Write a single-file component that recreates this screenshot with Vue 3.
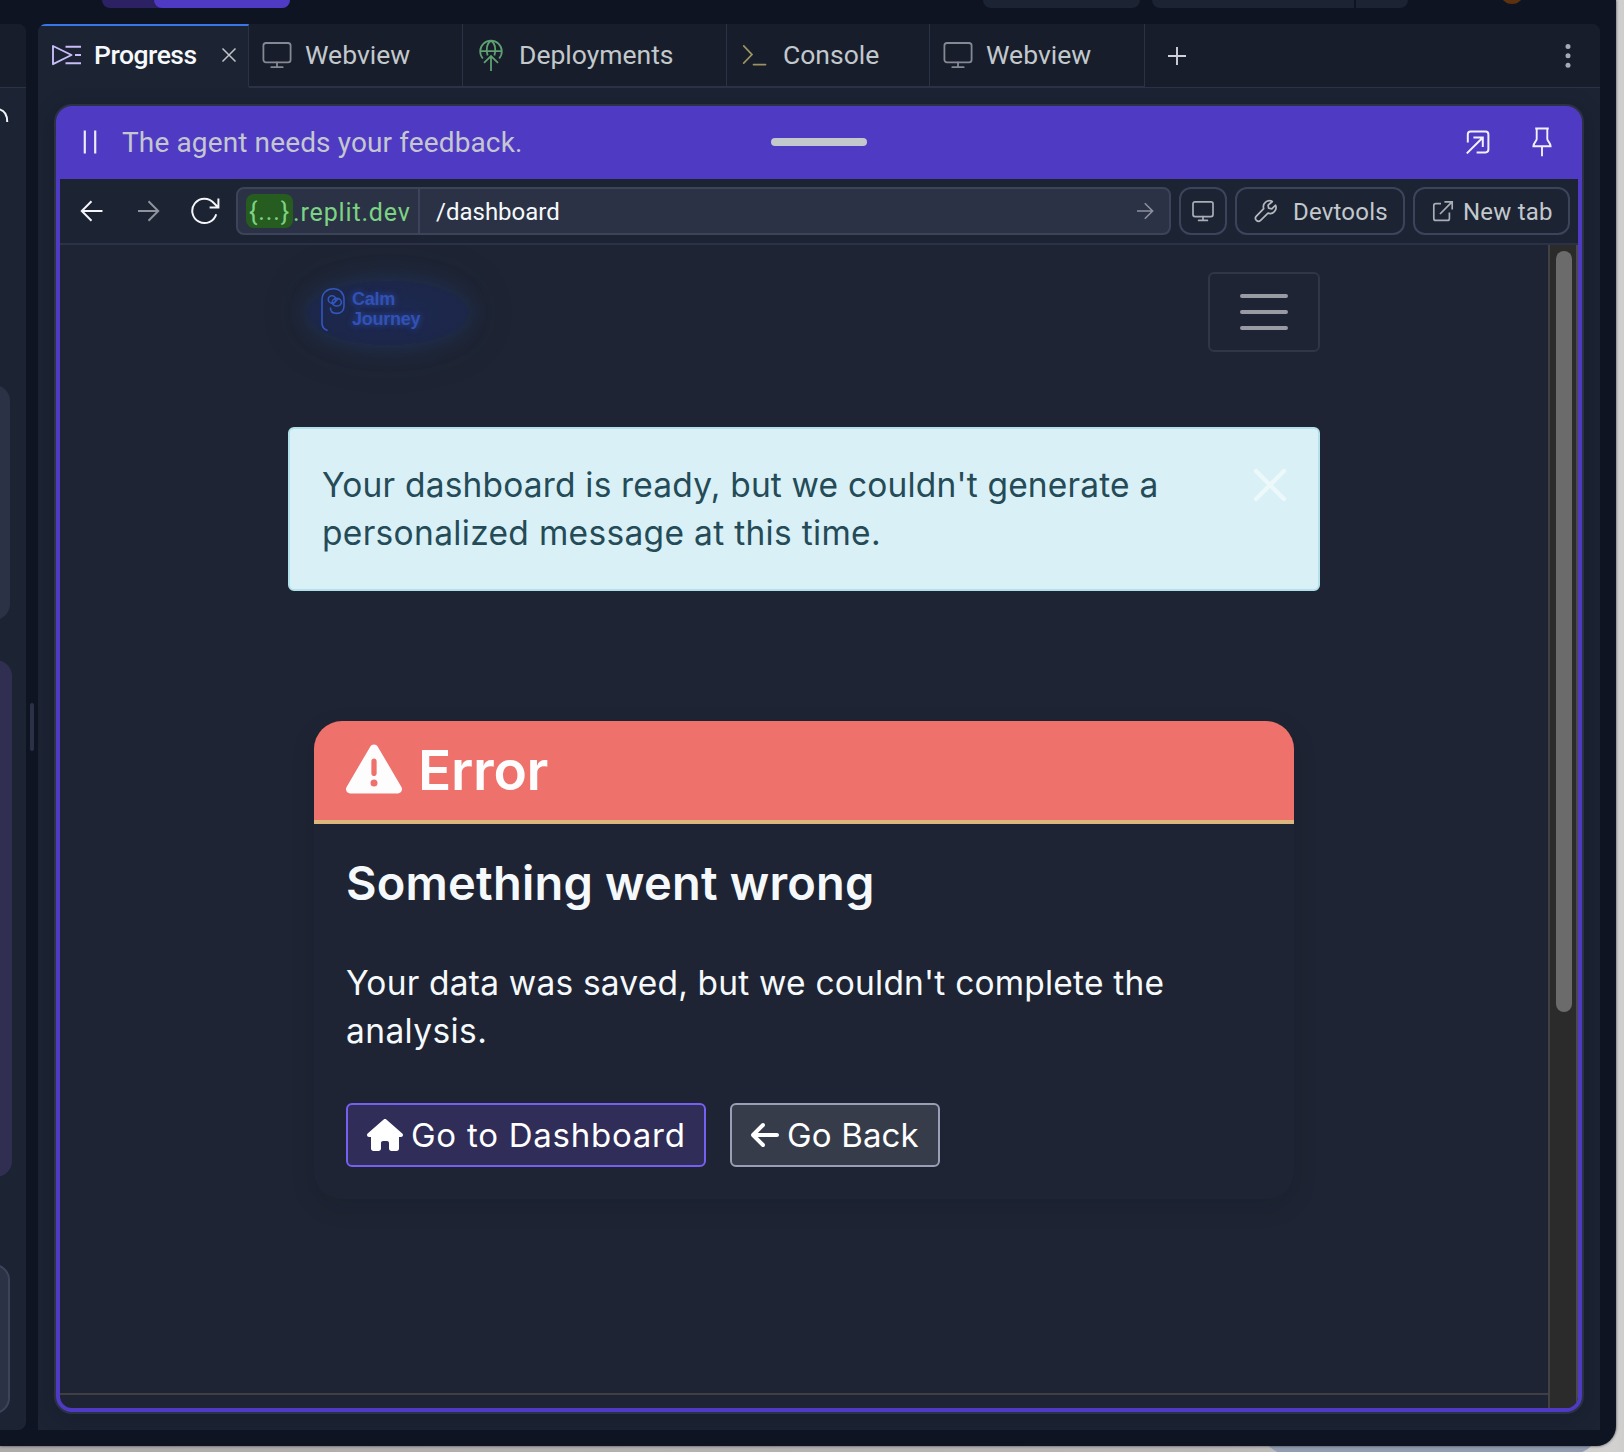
<script setup>
const tabs = [
  { label: 'Progress', icon: 'progress', active: true, width: 211 },
  { label: 'Webview', icon: 'monitor', width: 214 },
  { label: 'Deployments', icon: 'deploy', width: 264 },
  { label: 'Console', icon: 'console', width: 203 },
  { label: 'Webview', icon: 'monitor', width: 215 },
]
</script>

<template>
  <div class="desktop">
    <div class="dock"></div>
    <div class="window">
      <header class="topbar">
        <div class="run-pill"><span class="run-pill-main"></span></div>
        <div class="top-actions">
          <span class="chip invite"></span>
          <span class="chip deploy"></span>
          <span class="chip more"></span>
        </div>
        <span class="avatar"></span>
      </header>

      <div class="workspace">
        <aside class="chat">
          <div class="chat-head"></div>
          <svg class="spinner" width="10" height="18" viewBox="0 0 10 18">
            <path d="M-2 2C4 3 7.3 8 7.2 15" fill="none" stroke="#f2f5fa" stroke-width="2" />
          </svg>
          <div class="bubble"></div>
          <div class="bubble mine"></div>
          <div class="composer"></div>
        </aside>

        <div class="splitter"><span></span></div>

        <section class="pane">
          <nav class="tabs">
            <div
              v-for="(tab, i) in tabs"
              :key="i"
              class="tab"
              :class="{ active: tab.active }"
              :style="{ width: tab.width + 'px' }"
            >
              <svg class="tab-icon" viewBox="0 0 32 32" fill="none">
                <g v-if="tab.icon === 'progress'" stroke="#c8bdf8" stroke-width="1.9">
                  <path d="M3 7L21.5 16L3 25.2Z" stroke-linejoin="round" />
                  <path d="M15.5 7.7H31M25 16H31M15.5 24.3H31" />
                </g>
                <g v-else-if="tab.icon === 'monitor'" stroke="#858994" stroke-width="1.8">
                  <rect x="2.4" y="4" width="27.2" height="19.4" rx="2.6" />
                  <path d="M16 23.4V28M10.3 28.2H21.7" stroke-linecap="round" />
                </g>
                <g v-else-if="tab.icon === 'deploy'" stroke="#5f9f70" stroke-width="1.8">
                  <path d="M7.8 19.5A10.8 10.8 0 1 1 24.2 19.5" />
                  <path d="M16 1.5C11.5 5 11 11 12.6 16.5M16 1.5C20.5 5 21 11 19.4 16.5M5.2 12.2H26.8" />
                  <path d="M16 32V17.2M9 23.8L16 17L23 23.8" />
                </g>
                <g v-else stroke="#9c925f" stroke-width="1.7">
                  <path d="M4.7 6.8L13 15.6L4.7 24.2M14.5 25.6H26.5" stroke-linecap="round" />
                </g>
              </svg>
              <span>{{ tab.label }}</span>
              <svg v-if="tab.active" class="tab-close" viewBox="0 0 16 16">
                <path d="M1.5 1.5L14.5 14.5M14.5 1.5L1.5 14.5" stroke="#c0c4ca" stroke-width="1.5" />
              </svg>
            </div>
            <div class="tabs-rest">
              <svg width="20" height="20" viewBox="0 0 20 20">
                <path d="M10 1V19M1 10H19" stroke="#cfd2d8" stroke-width="1.9" />
              </svg>
              <svg width="6" height="26" viewBox="0 0 6 26" fill="#a6aab4">
                <circle cx="3" cy="3.4" r="2.5" />
                <circle cx="3" cy="12.8" r="2.5" />
                <circle cx="3" cy="22.2" r="2.5" />
              </svg>
            </div>
          </nav>

          <div class="preview">
            <div class="agent-bar">
              <svg class="pause" width="14" height="24" viewBox="0 0 14 24">
                <path d="M1.8 0.5V23.5M12.2 0.5V23.5" stroke="#eceaf8" stroke-width="2.2" />
              </svg>
              <span class="agent-text">The agent needs your feedback.</span>
              <span class="grip"></span>
              <div class="agent-actions">
                <svg width="24" height="24" viewBox="0 0 24 24" fill="none" stroke="#f2f0fb" stroke-width="2">
                  <path d="M1.8 12.5V4.4Q1.8 1.6 4.6 1.6H19.6Q22.4 1.6 22.4 4.4V19.6Q22.4 22.4 19.6 22.4H10.6" />
                  <path d="M0.8 23.4L16.6 7.8M7.4 7.6H16.8V17" />
                </svg>
                <svg width="20" height="30" viewBox="0 0 20 30" fill="none" stroke="#f2f0fb" stroke-width="1.9">
                  <path d="M3.2 1.5H16.8M4.7 1.5V12C4.7 14.2 1.6 15.4 1.4 19.3H18.6C18.4 15.4 15.3 14.2 15.3 12V1.5M10 19.3V29.3" />
                </svg>
              </div>
            </div>

            <div class="toolbar">
              <svg class="nav" viewBox="0 0 28 28">
                <path d="M24.5 14H4M13.5 4.3L3.8 14L13.5 23.7" stroke="#f4f6fa" />
              </svg>
              <svg class="nav" viewBox="0 0 28 28">
                <path d="M4 14H24M14.5 4.3L24.2 14L14.5 23.7" stroke="#8f939d" />
              </svg>
              <svg class="nav reload" viewBox="0 0 30 28">
                <path d="M26.2 17.2A12.2 12.2 0 1 1 23.8 6L28 10.2M28.4 1.6V10.4H19.6" stroke="#f4f6fa" />
              </svg>
              <div class="url">
                <div class="host"><span class="token">{...}</span><span class="domain">.replit.dev</span></div>
                <span class="path">/dashboard</span>
                <svg width="18" height="20" viewBox="0 0 18 20" fill="none" stroke="#8d919d" stroke-width="1.6">
                  <path d="M1 10H16.5M8.8 2.2L16.6 10L8.8 17.8" />
                </svg>
              </div>
              <button class="tool square">
                <svg width="24" height="24" viewBox="0 0 24 24" fill="none" stroke="#a9adb6" stroke-width="1.7">
                  <rect x="2" y="2.8" width="20" height="14.8" rx="2" />
                  <path d="M12 17.6V21.2M7.6 21.4H16.4" stroke-linecap="round" />
                </svg>
              </button>
              <button class="tool devtools">
                <svg width="24" height="24" viewBox="0 0 24 24" fill="none" stroke="#b4b8bf" stroke-width="1.7" stroke-linejoin="round">
                  <path d="M18.3 2.5A6 6 0 0 0 9.7 9.6L2.4 17.2A2.9 2.9 0 0 0 6.6 21.4L14 14.1A6 6 0 0 0 21.6 6.2L17.8 9.8L14.6 9.2L14.1 6.2Z" />
                </svg>
                <span>Devtools</span>
              </button>
              <button class="tool newtab">
                <svg width="22" height="22" viewBox="0 0 22 22" fill="none" stroke="#a9adb6" stroke-width="1.7">
                  <path d="M9 3.6H3.8Q1.8 3.6 1.8 5.6V18.4Q1.8 20.4 3.8 20.4H15.4Q17.4 20.4 17.4 18.4V12.4" />
                  <path d="M8 14L20 1.9M12.4 1.8H20.2V9.6" />
                </svg>
                <span>New tab</span>
              </button>
            </div>

            <div class="viewport">
              <main class="page">
                <div class="container">
                  <div class="navbar">
                    <div class="logo">
                      <svg width="26" height="46" viewBox="0 0 26 46" fill="none" stroke="#3157bd" stroke-width="1.6">
                        <path d="M7.6 43.5C4 42.5 2 40 2 36V13C2 6 7 1.8 13.4 1.8C20 1.8 24 6.5 24 12.5V19C24 24 20.5 26.4 16.5 26.4C12.5 26.4 10.4 24.5 10.4 20.5" />
                        <circle cx="12" cy="12.4" r="3.7" />
                        <ellipse cx="16.8" cy="15.2" rx="4.6" ry="3.8" />
                        <path d="M12.5 17.5L18.5 11.5" />
                      </svg>
                      <p class="brand">Calm<br />Journey</p>
                    </div>
                    <button class="toggler"><i></i><i></i><i></i></button>
                  </div>

                  <div class="alert">
                    <p>
                      <span class="a1">Your dashboard is ready, but we couldn't generate a</span><br />
                      <span class="a2">personalized message at this time.</span>
                    </p>
                    <svg width="34" height="34" viewBox="0 0 34 34">
                      <path d="M3 3L31 31M31 3L3 31" stroke="#edf8fb" stroke-width="4.2" stroke-linecap="round" />
                    </svg>
                  </div>

                  <article class="card">
                    <h2>
                      <svg width="56" height="56" viewBox="0 0 512 512" fill="#fdfdfd">
                        <path d="M256 32c14.2 0 27.3 7.5 34.5 19.8l216 368c7.3 12.4 7.3 27.7 .2 40.1S486.3 480 472 480L40 480c-14.3 0-27.6-7.7-34.7-20.1s-7-27.8 .2-40.1l216-368C228.7 39.5 241.8 32 256 32zm0 128c-13.3 0-24 10.7-24 24l0 112c0 13.3 10.7 24 24 24s24-10.7 24-24l0-112c0-13.3-10.7-24-24-24zm32 224a32 32 0 1 0-64 0 32 32 0 1 0 64 0z" />
                      </svg>
                      <span>Error</span>
                    </h2>
                    <div class="card-body">
                      <h3>Something went wrong</h3>
                      <p>Your data was saved, but we couldn't complete the<br /><span>analysis.</span></p>
                      <div class="buttons">
                        <button class="btn primary">
                          <svg width="36" height="32" viewBox="0 0 576 512" fill="#fff">
                            <path d="M575.8 255.5c0 18-15 32.1-32 32.1l-32 0 .7 160.2c0 2.7-.2 5.4-.5 8.1l0 16.2c0 22.1-17.9 40-40 40l-16 0c-1.1 0-2.2 0-3.3-.1c-1.4 .1-2.8 .1-4.2 .1L416 512l-24 0c-22.1 0-40-17.9-40-40l0-24 0-64c0-17.7-14.3-32-32-32l-64 0c-17.7 0-32 14.3-32 32l0 64 0 24c0 22.1-17.9 40-40 40l-24 0-31.9 0c-1.5 0-3-.1-4.5-.2c-1.2 .1-2.4 .2-3.6 .2l-16 0c-22.1 0-40-17.9-40-40l0-112c0-.9 0-1.9 .1-2.8l0-69.7-32 0c-18 0-32-14-32-32.1c0-9 3-17 10-24L266.4 8c7-7 15-8 22-8s15 2 21 7L564.8 231.5c8 7 12 15 11 24z" />
                          </svg>
                          <span>Go to Dashboard</span>
                        </button>
                        <button class="btn secondary">
                          <svg width="28" height="32" viewBox="0 0 448 512" fill="#fff">
                            <path d="M9.4 233.4c-12.5 12.5-12.5 32.8 0 45.3l160 160c12.5 12.5 32.8 12.5 45.3 0s12.5-32.8 0-45.3L109.2 288 416 288c17.7 0 32-14.3 32-32s-14.3-32-32-32l-306.7 0L214.6 118.6c12.5-12.5 12.5-32.8 0-45.3s-32.8-12.5-45.3 0l-160 160z" />
                          </svg>
                          <span>Go Back</span>
                        </button>
                      </div>
                    </div>
                  </article>
                </div>
                <div class="page-foot"></div>
              </main>
              <div class="scrollbar"><span></span></div>
            </div>
          </div>
        </section>
      </div>
    </div>
  </div>
</template>

<style>
body { margin: 0; background: #b0aeac; }
</style>

<style scoped>
* { box-sizing: border-box; }
p, h2, h3 { margin: 0; font-weight: 400; }
svg { display: block; flex: none; }
button { font: inherit; color: inherit; background: none; padding: 0; margin: 0; }

.desktop {
  position: relative;
  width: 1624px;
  height: 1452px;
  overflow: hidden;
  background: linear-gradient(90deg, #adabaa 0, #b9b7b6 1200px, #d2d1d0 1616px, #cfcdcc 1624px);
  font-family: Roboto, "Liberation Sans", sans-serif;
}
.dock {
  position: absolute;
  left: 1255px;
  top: 1346px;
  width: 350px;
  height: 110px;
  border-radius: 40px;
  background: #939db1;
}
.window {
  position: relative;
  width: 1616px;
  height: 1446px;
  background: #0e1422;
  border-radius: 0 0 20px 0;
  box-shadow: 0 0 3px 0 #3b3b42;
  display: flex;
  flex-direction: column;
}

.topbar { height: 24px; display: flex; align-items: flex-start; flex: none; }
.run-pill { width: 188px; height: 8px; margin-left: 102px; background: #2b2163; border-radius: 0 0 8px 8px; display: flex; justify-content: flex-end; }
.run-pill-main { width: 136px; background: #4f3ac4; border-radius: 0 0 8px 8px; }
.top-actions { display: flex; margin-left: 693px; }
.chip { height: 8px; background: #1c2333; }
.invite { width: 157px; border-radius: 0 0 8px 8px; margin-right: 12px; }
.deploy { width: 202px; border-radius: 0 0 0 8px; margin-right: 2px; }
.more { width: 52px; border-radius: 0 0 8px 0; }
.avatar { width: 24px; height: 24px; border-radius: 50%; background: #5e310f; margin: -20px 0 0 92px; }

.workspace { display: flex; height: 1406px; }
.chat { width: 26px; background: #1c2333; border-radius: 0 8px 8px 0; overflow: hidden; }
.chat-head { height: 64px; background: #171d2b; border-bottom: 1px solid #2b3245; }
.spinner { margin-top: 19px; }
.bubble { width: 60px; height: 235px; margin: 260px 0 0 -50px; border-radius: 16px; background: #2b3245; }
.bubble.mine { width: 62px; height: 517px; margin-top: 40px; background: #302f52; }
.composer { width: 60px; height: 150px; margin: 87px 0 0 -50px; border-radius: 16px; border: 2px solid #3c445c; background: #2b3245; }
.splitter { width: 12px; padding: 679px 4px 0; }
.splitter span { display: block; height: 48px; border-radius: 2px; background: #2b3245; }

.pane { width: 1562px; background: #1c2333; border-radius: 8px 8px 0 0; overflow: hidden; }
.tabs { height: 64px; display: flex; }
.tab {
  display: flex;
  align-items: center;
  gap: 12px;
  padding-left: 12px;
  background: #171d2b;
  border-right: 1px solid #2b3245;
  border-bottom: 2px solid #2b3245;
  font-size: 26.5px;
  line-height: 1;
  color: #c2c8cc;
}
.tab.active { background: #1c2333; border-bottom-color: #1c2333; border-top: 2px solid #3877e8; color: #f5f9fc; padding-bottom: 2px; letter-spacing: -0.5px; font-weight: 500; }
.tab-icon { width: 32px; height: 32px; }
.tab-close { width: 16px; height: 16px; margin-left: 12px; }
.tabs-rest { flex: 1; display: flex; align-items: center; justify-content: space-between; padding: 1px 29px 0 22px; background: #171d2b; border-bottom: 1px solid #2b3245; }

.preview {
  width: 1530px;
  height: 1310px;
  margin: 16px 0 0 16px;
  border: 2px solid #2b3245;
  border-radius: 18px;
  background: #4f3ac4;
  box-shadow: 0 4px 20px rgba(10, 14, 24, 0.25);
}
.agent-bar { position: relative; height: 73px; display: flex; align-items: center; padding: 0 30px 0 27px; }
.pause { margin: -1px 25px 0 0; }
.agent-text { font-size: 28px; line-height: 1; color: #c4c7cf; letter-spacing: 0.13px; }
.grip { position: absolute; left: 715px; top: 32px; width: 96px; height: 8px; border-radius: 4px; background: #c2c8cc; }
.agent-actions { margin: -2px 0 0 auto; display: flex; align-items: center; gap: 42px; }

.toolbar { height: 66px; margin: 0 4px; padding: 0 8px 0 18px; background: #1c2333; border-bottom: 2px solid #2b3245; display: flex; align-items: center; }
.nav { width: 28px; height: 28px; margin-right: 28px; fill: none; stroke-width: 2; }
.nav.reload { width: 30px; margin-right: 16px; }
.url { flex: 1; height: 48px; display: flex; align-items: center; background: #2b3245; border: 2px solid #3c445c; border-radius: 8px; padding-right: 15px; }
.host { height: 44px; width: 182px; padding-left: 8px; border-right: 2px solid #3c445c; display: flex; align-items: center; font-size: 25px; line-height: 1; color: #7dd384; }
.token { width: 47px; height: 34px; line-height: 35px; text-align: center; border-radius: 8px; background: #265c20; letter-spacing: 0.9px; }
.domain { letter-spacing: 0.85px; padding-top: 2px; }
.path { flex: 1; padding: 2px 0 0 16px; font-size: 24px; line-height: 1; color: #f5f9fc; }
.tool { height: 48px; margin-left: 8px; border: 2px solid #3c445c; border-radius: 12px; display: flex; align-items: center; color: #c2c8cc; font-size: 24px; line-height: 1; letter-spacing: 0.2px; }
.tool span { padding-top: 2px; }
.square { width: 48px; justify-content: center; }
.devtools { width: 170px; padding-left: 17px; }
.devtools span { margin-left: 15px; }
.newtab { width: 157px; padding-left: 17px; }
.newtab span { margin-left: 9px; }

.viewport { height: 1163px; margin: 0 4px 4px; display: flex; background: #1e2433; border-radius: 0 0 12px 12px; overflow: hidden; }
.page { width: 1488px; height: 1163px; display: flex; flex-direction: column; justify-content: space-between; font-family: Inter, "Liberation Sans", sans-serif; }
.page-foot { height: 15px; border-top: 2px solid #3f3f44; }
.scrollbar { width: 30px; background: #2b2b2b; border-left: 2px solid #424245; border-right: 2px solid #4a4a4c; padding: 6px 4px 0 6px; }
.scrollbar span { display: block; height: 761px; border-radius: 8px; background: #6b6b6b; }
.container { width: 1032px; margin-left: 228px; }

.navbar { display: flex; justify-content: space-between; padding-top: 27px; }
.logo {
  width: 160px;
  height: 64px;
  margin: 9px 0 0 20px;
  border-radius: 50%;
  display: flex;
  padding: 6px 0 0 12px;
  background: radial-gradient(ellipse, #1e2951, #1b2546);
  box-shadow: 0 0 22px 2px rgba(36, 66, 130, 0.4), 0 0 44px 4px rgba(36, 50, 80, 0.25);
}
.brand { margin: 2px 0 0 6px; font: bold 18px/20px "Liberation Sans", sans-serif; letter-spacing: -0.25px; color: #3152b4; text-shadow: 0 0 6px rgba(49, 87, 200, 0.7); }
.toggler { width: 112px; height: 80px; border: 2px solid #303645; border-radius: 6px; display: flex; flex-direction: column; align-items: center; justify-content: center; gap: 12px; }
.toggler i { width: 48px; height: 4px; border-radius: 2px; background: #989ba3; }

.alert { height: 164px; margin-top: 75px; border: 2px solid #b2e1eb; border-radius: 6px; background: #d9f0f6; padding: 32px 31px 0 32px; display: flex; justify-content: space-between; color: #244b57; font-size: 33.5px; line-height: 48px; }
.alert p { white-space: nowrap; }
.alert svg { margin-top: 7px; }
.a1 { letter-spacing: 0.18px; }
.a2 { letter-spacing: 0.32px; }

.card { width: 980px; height: 478px; margin: 130px 0 0 26px; border-radius: 28px; box-shadow: 0 8px 24px rgba(10, 14, 24, 0.13); }
.card h2 { height: 103px; background: #ee716b; border-bottom: 4px solid #dcb67c; border-radius: 28px 28px 0 0; display: flex; align-items: center; padding-left: 32px; font-size: 55px; font-weight: 600; line-height: 1; letter-spacing: -0.3px; color: #fdfdfd; }
.card h2 svg { margin-top: -4px; }
.card h2 span { margin-left: 16px; }
.card-body { padding: 33px 32px 0; color: #f5f9fc; }
.card h3 { font-size: 47px; line-height: 52px; font-weight: 600; letter-spacing: 0.2px; white-space: nowrap; }
.card p { margin-top: 50px; font-size: 33.5px; line-height: 48px; letter-spacing: 0.2px; white-space: nowrap; }
.card p span { letter-spacing: 0.4px; }
.buttons { display: flex; gap: 24px; margin-top: 48px; }
.btn { height: 64px; border-radius: 6px; display: flex; align-items: center; padding: 0 0 0 19px; font-size: 33px; line-height: 1; color: #fff; white-space: nowrap; }
.btn svg { margin-top: -1px; }
.btn span { margin-left: 8px; }
.primary { width: 360px; background: #302d58; border: 2px solid #7660f0; letter-spacing: 0.75px; }
.secondary { width: 210px; background: #373c4b; border: 2px solid #9b9fb6; letter-spacing: 0.15px; }
</style>
